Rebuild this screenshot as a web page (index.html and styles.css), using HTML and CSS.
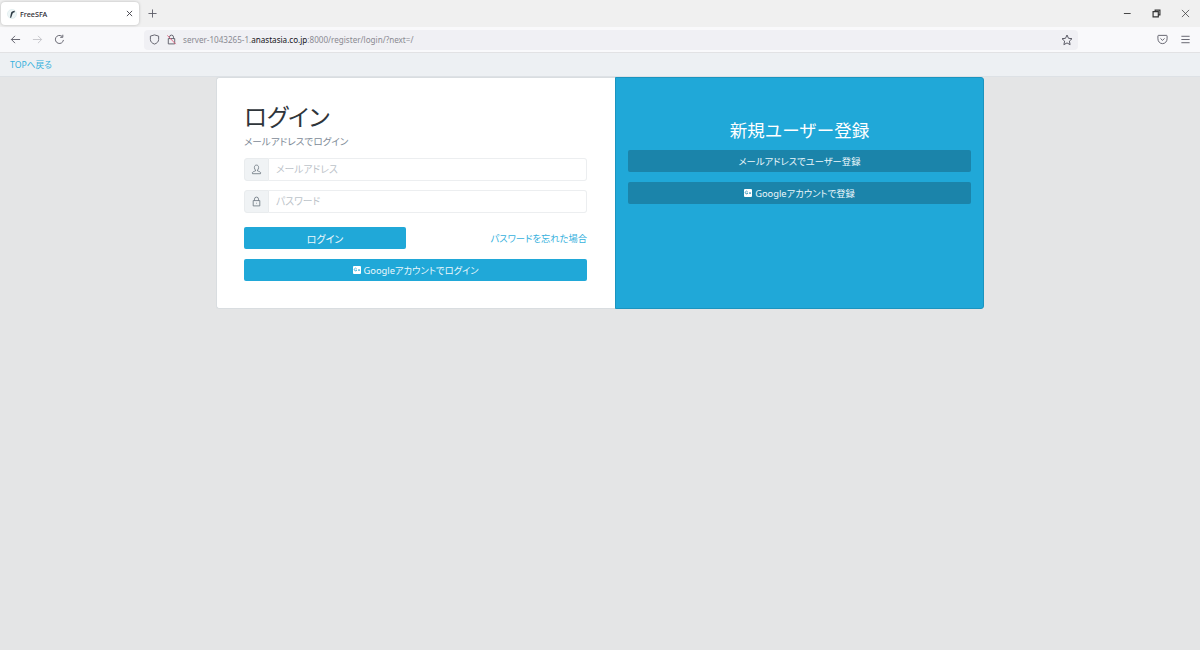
FILE: index.html
```html
<!DOCTYPE html>
<html lang="ja">

<head>
  <meta charset="UTF-8">
  <meta name="viewport" content="width=device-width, initial-scale=1.0">
  <title>FreeSFA</title>
  <link rel="stylesheet" href="styles.css">
</head>

<body>
  <!-- browser chrome -->
  <div class="tabstrip">
    <div class="tab">
      <svg class="favicon" viewBox="0 0 12 12">
        <circle cx="6" cy="6" r="5.5" fill="#eef6f7" stroke="#d5e6e8" stroke-width="0.6" />
        <path d="M3.6 10.4 4.8 4.8Q5.4 2.4 9.6 2.2L8.8 4.2Q7 4.2 6.6 5.6L6.3 6.6 5 10.4Z" fill="#2c3a44" />
      </svg>
      <span class="tab-title">FreeSFA</span>
      <svg class="tab-close" viewBox="0 0 8 8">
        <path d="M1 1 7 7M7 1 1 7" />
      </svg>
    </div>
    <svg class="new-tab" viewBox="0 0 10 10">
      <path d="M5 .5V9.5M.5 5H9.5" />
    </svg>
    <div class="win-controls">
      <svg viewBox="0 0 10 10">
        <path d="M1 5H8.5" />
      </svg>
      <svg viewBox="0 0 10 10">
        <path d="M3.5 2.5V1.2H8.8V6.5H7.5M1.2 3H7V8.8H1.2Z" stroke-width="1.3" />
      </svg>
      <svg viewBox="0 0 10 10">
        <path d="M1 1 9 9M9 1 1 9" stroke-width="0.8" />
      </svg>
    </div>
  </div>

  <div class="toolbar">
    <svg class="tool" viewBox="0 0 12 12">
      <path d="M11 6H1.5M5.5 2 1.5 6 5.5 10" />
    </svg>
    <svg class="tool tool-off" viewBox="0 0 12 12">
      <path d="M1 6H10.5M6.5 2 10.5 6 6.5 10" />
    </svg>
    <svg class="tool" viewBox="0 0 12 12">
      <path d="M10.3 6.5A4.4 4.4 0 1 1 8.8 2.6M9.6 .8V3.6H6.8" />
    </svg>
    <div class="urlbar">
      <svg class="url-icon" viewBox="0 0 12 12">
        <path d="M6 1 10.5 2.3V6C10.5 8.4 8.6 10.2 6 11 3.4 10.2 1.5 8.4 1.5 6V2.3Z" />
      </svg>
      <svg class="url-icon" viewBox="0 0 12 12">
        <path d="M3.8 5V3.4A2.2 2.2 0 0 1 8.2 3.4V5M2.5 5H9.5V10.8H2.5Z" />
        <path class="lock-slash" d="M1.5 1.5 10.5 11" />
      </svg>
      <span class="url">server-1043265-1.<b>anastasia.co.jp</b>:8000/register/login/?next=/</span>
      <svg class="url-star" viewBox="0 0 12 12">
        <path d="M6 1 7.5 4.3 11 4.7 8.4 7.1 9.1 10.7 6 8.9 2.9 10.7 3.6 7.1 1 4.7 4.5 4.3Z" />
      </svg>
    </div>
    <svg class="tool pocket" viewBox="0 0 12 12">
      <path d="M1.6 1.5H10.4Q11 1.5 11 2.2V5.2C11 8.2 8.8 10.5 6 10.5S1 8.2 1 5.2V2.2Q1 1.5 1.6 1.5ZM3.8 4.8 6 7 8.2 4.8" />
    </svg>
    <svg class="tool menu" viewBox="0 0 12 12">
      <path d="M1.5 2.5H10.5M1.5 6H10.5M1.5 9.5H10.5" />
    </svg>
  </div>

  <!-- page -->
  <div class="topbar">
    <a class="top-link" href="#">TOPへ戻る</a>
  </div>

  <main class="card-group">
    <section class="card card-login">
      <h1>ログイン</h1>
      <p class="muted">メールアドレスでログイン</p>
      <div class="input-group">
        <span class="input-icon">
          <svg viewBox="0 0 12 12">
            <path d="M6 1.2C4.5 1.2 3.7 2.3 3.7 3.8 3.7 5 4.2 6 4.9 6.6V7.6C3.6 8 2 8.4 1.6 9.2V10.6H10.4V9.2C10 8.4 8.4 8 7.1 7.6V6.6C7.8 6 8.3 5 8.3 3.8 8.3 2.3 7.5 1.2 6 1.2Z" />
          </svg>
        </span>
        <input class="input" type="text" placeholder="メールアドレス">
      </div>
      <div class="input-group">
        <span class="input-icon">
          <svg viewBox="0 0 12 12">
            <path d="M3.8 5V3.4A2.2 2.2 0 0 1 8.2 3.4V5M2.4 5H9.6V10.8H2.4ZM6 7.4V8.2" />
          </svg>
        </span>
        <input class="input" type="password" placeholder="パスワード">
      </div>
      <div class="login-row">
        <button class="btn btn-login">ログイン</button>
        <a class="forgot" href="#">パスワードを忘れた場合</a>
      </div>
      <button class="btn btn-wide">
        <svg class="g-icon" viewBox="0 0 8 8">
          <rect width="8" height="8" rx="1" fill="#fff" />
          <path d="M3.6 2.6A1.4 1.4 0 1 0 3.9 4.1H2.6M5 4.1H7M6 3.2V5" fill="none" stroke="#20a8d8" stroke-width="0.7" />
        </svg>
        Googleアカウントでログイン
      </button>
    </section>

    <section class="card card-register">
      <h2>新規ユーザー登録</h2>
      <button class="btn btn-dark">メールアドレスでユーザー登録</button>
      <button class="btn btn-dark">
        <svg class="g-icon" viewBox="0 0 8 8">
          <rect width="8" height="8" rx="1" fill="#fff" />
          <path d="M3.6 2.6A1.4 1.4 0 1 0 3.9 4.1H2.6M5 4.1H7M6 3.2V5" fill="none" stroke="#1b84aa" stroke-width="0.7" />
        </svg>
        Googleアカウントで登録
      </button>
    </section>
  </main>
</body>

</html>
```

FILE: styles.css
```css
:root {
  --main-color: #20a8d8;
  --dark-blue: #1b84aa;
  --txt-color: #2f353a;
  --font: "Noto Sans", "Noto Sans CJK JP", sans-serif;
}

* {
  margin: 0;
  padding: 0;
  box-sizing: border-box;
  font-family: var(--font);
  font-feature-settings: "palt";
}

body {
  min-height: 650px;
  background-color: #e4e5e6;
  color: var(--txt-color);
  font-size: 10px;
  overflow: hidden;
}

svg {
  display: block;
  flex: none;
  fill: none;
  stroke: #5b5b66;
  stroke-width: 1;
}

/* browser chrome */
.tabstrip {
  height: 27px;
  padding: 2px 0 2px 1px;
  display: flex;
  align-items: center;
  background-color: #f0f0f0;
}

.tab {
  width: 138px;
  height: 23px;
  padding: 0 6px;
  display: flex;
  align-items: center;
  background-color: #fff;
  border-radius: 4px;
  box-shadow: 0 0 3px rgba(0, 0, 0, 0.25);
}

.favicon {
  width: 10px;
  height: 10px;
  stroke: none;
}

.favicon path {
  stroke: none;
}

.tab-title {
  margin-left: 3px;
  font-size: 7.2px;
  font-weight: 500;
  color: #2b2a33;
}

.tab-close {
  width: 7px;
  height: 7px;
  margin-left: auto;
  stroke: #3a3a44;
}

.new-tab {
  width: 9px;
  height: 9px;
  margin-left: 9px;
}

.win-controls {
  margin-left: auto;
  display: flex;
  gap: 20px;
  padding-right: 10px;
}

.win-controls svg {
  width: 9px;
  height: 9px;
  stroke: #333;
}

.toolbar {
  height: 26px;
  padding: 0 10px;
  display: flex;
  align-items: center;
  background-color: #f9f9fb;
  border-bottom: 1px solid #e2e2e4;
}

.tool {
  width: 11px;
  height: 11px;
  margin-right: 11px;
}

.tool-off {
  stroke: #c4c4c9;
}

.urlbar {
  width: 934px;
  height: 20px;
  margin-left: 68px;
  padding: 0 5px;
  display: flex;
  align-items: center;
  gap: 6px;
  background-color: #f0f0f4;
  border-radius: 4px;
  flex: none;
}

.url-icon {
  width: 11px;
  height: 11px;
}

.lock-slash {
  stroke: #e0607e;
}

.url {
  font-size: 8.1px;
  color: #8a8a92;
}

.url b {
  font-weight: 400;
  color: #15141a;
}

.url-star {
  width: 12px;
  height: 12px;
  margin-left: auto;
}

.pocket {
  margin-left: 79px;
  margin-right: 12px;
}

.menu {
  margin-right: 0;
}

/* page */
.topbar {
  height: 24px;
  padding-left: 10px;
  display: flex;
  align-items: center;
  background-color: #edf0f3;
  border-bottom: 1px solid #dde1e5;
}

.top-link {
  font-size: 8.7px;
  color: #36b1dd;
  text-decoration: none;
}

.forgot {
  font-size: 9.3px;
  color: #36b1dd;
  text-decoration: none;
}

.card-group {
  width: 768px;
  height: 232px;
  margin: 0 auto;
  display: flex;
}

.card {
  border: 1px solid #d9dde0;
}

.card-login {
  width: 399px;
  padding: 22px 28px 0 27px;
  background-color: #fff;
  border-right: 0;
  border-radius: 3px 0 0 3px;
}

.card-register {
  flex: 1;
  padding: 41px 12px 0;
  display: flex;
  flex-direction: column;
  gap: 10px;
  background-color: var(--main-color);
  border-color: #1b94bf;
  border-radius: 0 3px 3px 0;
  color: #fff;
}

h1 {
  margin-bottom: 1px;
  font-size: 23.5px;
  font-weight: 400;
  line-height: 34px;
}

h2 {
  margin-bottom: -2px;
  font-size: 17.5px;
  font-weight: 400;
  font-feature-settings: normal;
  line-height: 23px;
  text-align: center;
}

.muted {
  margin-bottom: 9px;
  font-size: 9.6px;
  line-height: 14px;
  color: #7d8a96;
}

.input-group {
  height: 23px;
  margin-bottom: 9px;
  display: flex;
}

.input-icon {
  width: 25px;
  display: flex;
  align-items: center;
  justify-content: center;
  background-color: #f0f3f5;
  border: 1px solid #e9ecee;
  border-radius: 3px 0 0 3px;
}

.input-icon svg {
  width: 11px;
  height: 11px;
  stroke: #6b7680;
  stroke-width: 0.9;
}

.input {
  flex: 1;
  min-width: 0;
  padding: 0 7px;
  font-size: 9.8px;
  background-color: #fff;
  border: 1px solid #eceef0;
  border-left: 0;
  border-radius: 0 3px 3px 0;
  outline: none;
}

.input::placeholder {
  color: #bcc3c9;
  opacity: 1;
}

.login-row {
  margin-top: 14px;
  margin-bottom: 10px;
  display: flex;
  justify-content: space-between;
  align-items: center;
}

.btn {
  height: 22px;
  display: flex;
  align-items: center;
  justify-content: center;
  gap: 3px;
  font-size: 9.3px;
  color: #ecf8fc;
  background-color: var(--main-color);
  border: 0;
  border-radius: 2px;
}

.btn-login {
  width: 162px;
  font-size: 10px;
}

.btn-wide {
  width: 100%;
}

.btn-dark {
  width: 100%;
  background-color: var(--dark-blue);
}

.g-icon {
  width: 8px;
  height: 8px;
  stroke: none;
}
```
